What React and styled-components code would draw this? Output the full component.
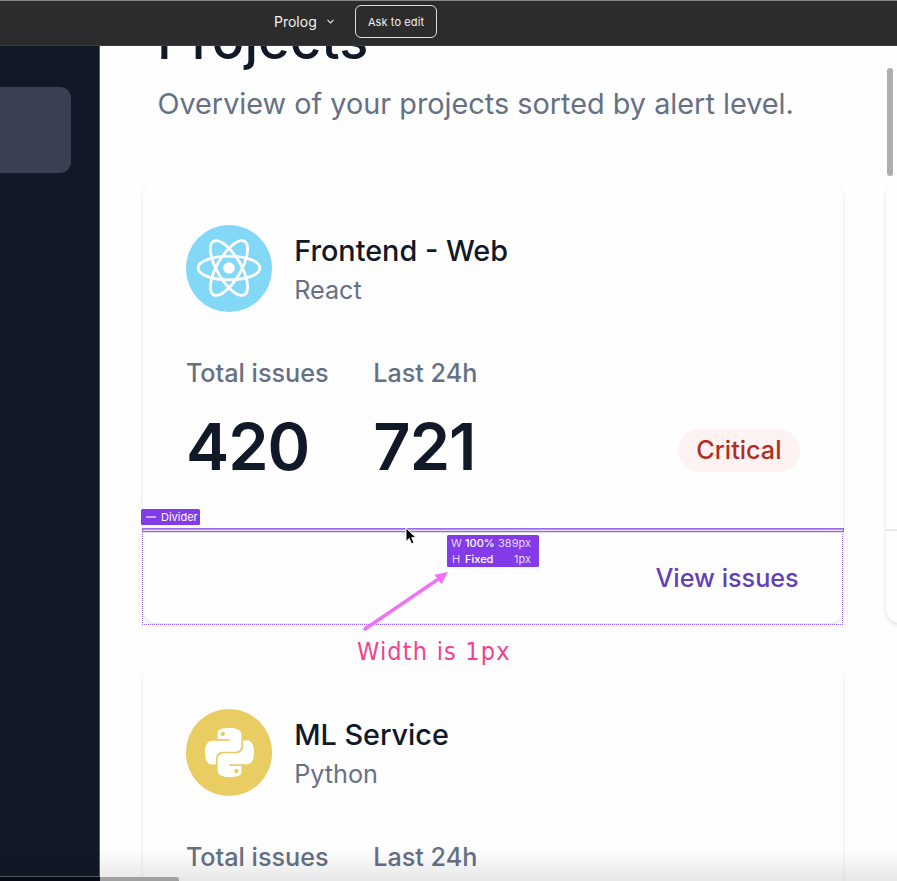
import React from "react";
import styled, { createGlobalStyle, css } from "styled-components";
import { SiPython } from "react-icons/si";

const GlobalStyle = createGlobalStyle`
  * { box-sizing: border-box; }
  body {
    margin: 0;
    background: #fff;
    overflow: hidden;
    font-family: Inter, "Liberation Sans", sans-serif;
    font-optical-sizing: none;
  }
`;

const Screen = styled.div`
  position: relative;
  width: 897px;
  height: 881px;
  overflow: hidden;
  display: flex;
  flex-direction: column;
`;

const Toolbar = styled.header`
  flex: 0 0 46px;
  display: flex;
  align-items: center;
  padding: 0 0 3px 274px;
  background: #2c2c2c;
  border-top: 1px solid #858585;
  border-bottom: 1px solid #413b40;
  color: #f2f2f2;
`;

const FileName = styled.span`
  width: 53px;
  font-size: 14px;
  line-height: 20px;
`;

const Chevron = styled.svg`
  width: 7px;
  height: 5px;
`;

const AskButton = styled.button`
  width: 82px;
  height: 33px;
  margin-left: 21px;
  padding: 0;
  border: 1.5px solid #dcdcdc;
  border-radius: 6px;
  background: transparent;
  color: #f2f2f2;
  font: 400 11px/16px Inter, sans-serif;
  letter-spacing: 0.1px;
`;

const Workspace = styled.div`
  flex: 1;
  min-height: 0;
  display: flex;
  overflow: hidden;
`;

const Sidebar = styled.aside`
  flex: 0 0 100px;
  padding-top: 41px;
  background: #111827;
  border-right: 1px solid #5b606b;
`;

const ActiveItem = styled.div`
  width: 71px;
  height: 86px;
  border-radius: 0 11px 11px 0;
  background: #384051;
`;

const Content = styled.main`
  flex: 1;
  min-width: 0;
  overflow: hidden;
  background: #fefefe;
`;

const PageHeading = styled.h1`
  margin: -39.8px 0 0 57px;
  font-size: 54px;
  line-height: 68.4px;
  font-weight: 500;
  letter-spacing: 0.1px;
  color: #111827;
`;

const Subtitle = styled.p`
  margin: 7.2px 0 57px 57.4px;
  font-size: 28.8px;
  line-height: 43.2px;
  letter-spacing: 0.01px;
  color: #667085;
  white-space: nowrap;
`;

const CardGrid = styled.div`
  display: grid;
  grid-template-columns: 700.5px 700.5px;
  gap: 43.2px 42.5px;
  padding-left: 42.7px;
`;

const Card = styled.article`
  height: 440.8px;
  border-radius: 14px;
  background: #fefefe;
  box-shadow: 0 2px 4px rgba(16, 24, 40, 0.12);
`;

const CardBody = styled.div`
  height: 347.4px;
  padding: 43.2px;
`;

const CardTop = styled.div`
  display: flex;
  align-items: center;
  gap: 21.9px;
`;

const Avatar = styled.div`
  width: 86.4px;
  height: 86.4px;
  border-radius: 50%;
  display: grid;
  place-items: center;
  color: #fff;
  background: ${(p) => p.$color};
`;

const ProjectName = styled.div`
  font-size: 28.8px;
  line-height: 43.2px;
  font-weight: 500;
  color: #111827;
`;

const ProjectLanguage = styled.div`
  font-size: 25.2px;
  line-height: 36px;
  color: #667085;
`;

const Stats = styled.div`
  display: flex;
  gap: 44.6px;
  margin-top: 43.4px;
`;

const StatLabel = styled.div`
  font-size: 25.2px;
  line-height: 36px;
  font-weight: 500;
  color: #667085;
`;

const StatValue = styled.div`
  margin-top: 16px;
  font-size: 64.8px;
  line-height: 79.2px;
  font-weight: 600;
  letter-spacing: -0.9px;
  color: #111827;
`;

const Badge = styled.span`
  align-self: flex-end;
  margin: 0 0 14.4px auto;
  padding: 3.6px 18.5px;
  border-radius: 22px;
  background: #fef3f2;
  color: #b02f22;
  font-size: 25.2px;
  line-height: 36px;
  font-weight: 500;
`;

const CardFooter = styled.div`
  display: flex;
  justify-content: flex-end;
  height: 93.4px;
  padding: 28.2px 44.5px 0 0;
  border-top: 2px solid #e7e9ee;
`;

const ViewLink = styled.a`
  font-size: 25.2px;
  line-height: 36px;
  font-weight: 500;
  color: #6240b8;
`;

const overlay = css`
  position: absolute;
  pointer-events: none;
`;

const PageScrollbar = styled.div`
  ${overlay}
  left: 887px;
  top: 67.5px;
  width: 6px;
  height: 108px;
  border-radius: 3px;
  background: #aeaeae;
`;

const FrameOutline = styled.div`
  ${overlay}
  left: 142px;
  top: 529px;
  width: 701px;
  height: 96px;
  border: 1px dotted #9c64f3;
`;

const DividerOutline = styled.div`
  ${overlay}
  left: 142px;
  top: 528px;
  width: 702px;
  height: 4px;
  border: 1px solid #9b69ec;
  background: linear-gradient(#b696f0 50%, #e4e1f0 50%);
  box-shadow: 0 1px 0 #e3d6fb;
`;

const LayerTag = styled.div`
  ${overlay}
  left: 141px;
  top: 509px;
  width: 59px;
  height: 16px;
  padding-left: 5px;
  border-radius: 1.5px;
  display: flex;
  align-items: center;
  gap: 5px;
  background: #833bea;
  color: #fff;
  font-size: 11px;
  line-height: 16px;
`;

const LayerDash = styled.span`
  width: 10px;
  height: 1.5px;
  background: #c9a8f7;
`;

const SizeTag = styled.div`
  ${overlay}
  left: 447px;
  top: 535px;
  width: 92px;
  height: 32px;
  padding: 0 8px 0 4px;
  border-radius: 1.5px;
  background: #833bea;
  color: #fff;
  font-size: 11px;
  line-height: 16px;
`;

const SizeRow = styled.div`
  display: grid;
  grid-template-columns: 14px 1fr auto;
`;

const Axis = styled.span`
  color: #e6d8fc;
  padding-left: ${(p) => p.$indent || 0}px;
`;

const SizeMode = styled.span`
  font-weight: 500;
`;

const Arrow = styled.svg`
  ${overlay}
  left: 360px;
  top: 566px;
  width: 94px;
  height: 68px;
`;

const Cursor = styled.svg`
  ${overlay}
  left: 403px;
  top: 525px;
  width: 16px;
  height: 23px;
`;

const Note = styled.div`
  ${overlay}
  left: 357px;
  top: 636px;
  color: #f0428f;
  font-family: "DejaVu Sans Condensed", "DejaVu Sans", sans-serif;
  font-stretch: condensed;
  font-size: 25px;
  line-height: 32px;
  letter-spacing: 1.2px;
  white-space: nowrap;
`;

const BottomShade = styled.div`
  ${overlay}
  left: 0;
  bottom: 0;
  width: 897px;
  height: 32px;
  background: linear-gradient(rgba(0, 0, 0, 0), rgba(0, 0, 0, 0.09));
`;

const SidebarEdge = styled.div`
  ${overlay}
  left: 0;
  top: 876px;
  width: 100px;
  height: 5px;
  border-top: 1px solid #555963;
  background: #080b15;
`;

const BottomScrollbar = styled.div`
  ${overlay}
  left: 100px;
  top: 877px;
  width: 79px;
  height: 4px;
  border-radius: 0 3px 0 0;
  background: #a0a0a0;
`;

function ReactLogo() {
  return (
    <svg width="68" height="68" viewBox="-34 -34 68 68" fill="none" stroke="#fff" strokeWidth="2.8">
      {[0, 60, 120].map((angle) => (
        <ellipse key={angle} rx="30.9" ry="11.9" transform={`rotate(${angle})`} />
      ))}
      <circle r="5.8" fill="#fff" stroke="none" />
    </svg>
  );
}

const projects = [
  { name: "Frontend - Web", language: "React", color: "#83d7f7", logo: <ReactLogo />, total: 420, recent: 721, level: "Critical" },
  { name: "ML Service", language: "Python", color: "#e9cd62", logo: <SiPython size={49} />, total: 420, recent: 721, level: "Critical" },
];

function ProjectCard({ project }) {
  return (
    <Card>
      <CardBody>
        <CardTop>
          <Avatar $color={project.color}>{project.logo}</Avatar>
          <div>
            <ProjectName>{project.name}</ProjectName>
            <ProjectLanguage>{project.language}</ProjectLanguage>
          </div>
        </CardTop>
        <Stats>
          <div>
            <StatLabel>Total issues</StatLabel>
            <StatValue>{project.total}</StatValue>
          </div>
          <div>
            <StatLabel>Last 24h</StatLabel>
            <StatValue>{project.recent}</StatValue>
          </div>
          <Badge>{project.level}</Badge>
        </Stats>
      </CardBody>
      <CardFooter>
        <ViewLink>View issues</ViewLink>
      </CardFooter>
    </Card>
  );
}

function EmptyCard() {
  return (
    <Card>
      <CardBody />
      <CardFooter />
    </Card>
  );
}

export default function App() {
  return (
    <Screen>
      <GlobalStyle />
      <Toolbar>
        <FileName>Prolog</FileName>
        <Chevron viewBox="0 0 7 5" fill="none" stroke="#e0e0e0" strokeWidth="1.2">
          <path d="M0.5 0.9 3.5 3.9 6.5 0.9" />
        </Chevron>
        <AskButton>Ask to edit</AskButton>
      </Toolbar>
      <Workspace>
        <Sidebar>
          <ActiveItem />
        </Sidebar>
        <Content>
          <PageHeading>Projects</PageHeading>
          <Subtitle>Overview of your projects sorted by alert level.</Subtitle>
          <CardGrid>
            <ProjectCard project={projects[0]} />
            <EmptyCard />
            <ProjectCard project={projects[1]} />
          </CardGrid>
        </Content>
      </Workspace>
      <PageScrollbar />
      <FrameOutline />
      <DividerOutline />
      <LayerTag>
        <LayerDash />
        Divider
      </LayerTag>
      <SizeTag>
        <SizeRow>
          <Axis>W</Axis>
          <SizeMode>100%</SizeMode>
          <Axis>389px</Axis>
        </SizeRow>
        <SizeRow>
          <Axis $indent={1}>H</Axis>
          <SizeMode>Fixed</SizeMode>
          <Axis>1px</Axis>
        </SizeRow>
      </SizeTag>
      <Arrow viewBox="0 0 94 68">
        <path d="M5 63 80 12" stroke="#ee72f6" strokeWidth="3.4" strokeLinecap="round" />
        <path d="M88 6 74.5 8.8 81.5 18.2Z" fill="#ee72f6" />
      </Arrow>
      <Cursor viewBox="0 0 16 23">
        <path d="M3 3v13.5l3.2-3 2.3 5.3 2.5-1-2.3-5.2H13Z" fill="#000" stroke="#fff" strokeWidth="1" />
      </Cursor>
      <Note>Width is 1px</Note>
      <BottomShade />
      <SidebarEdge />
      <BottomScrollbar />
    </Screen>
  );
}
